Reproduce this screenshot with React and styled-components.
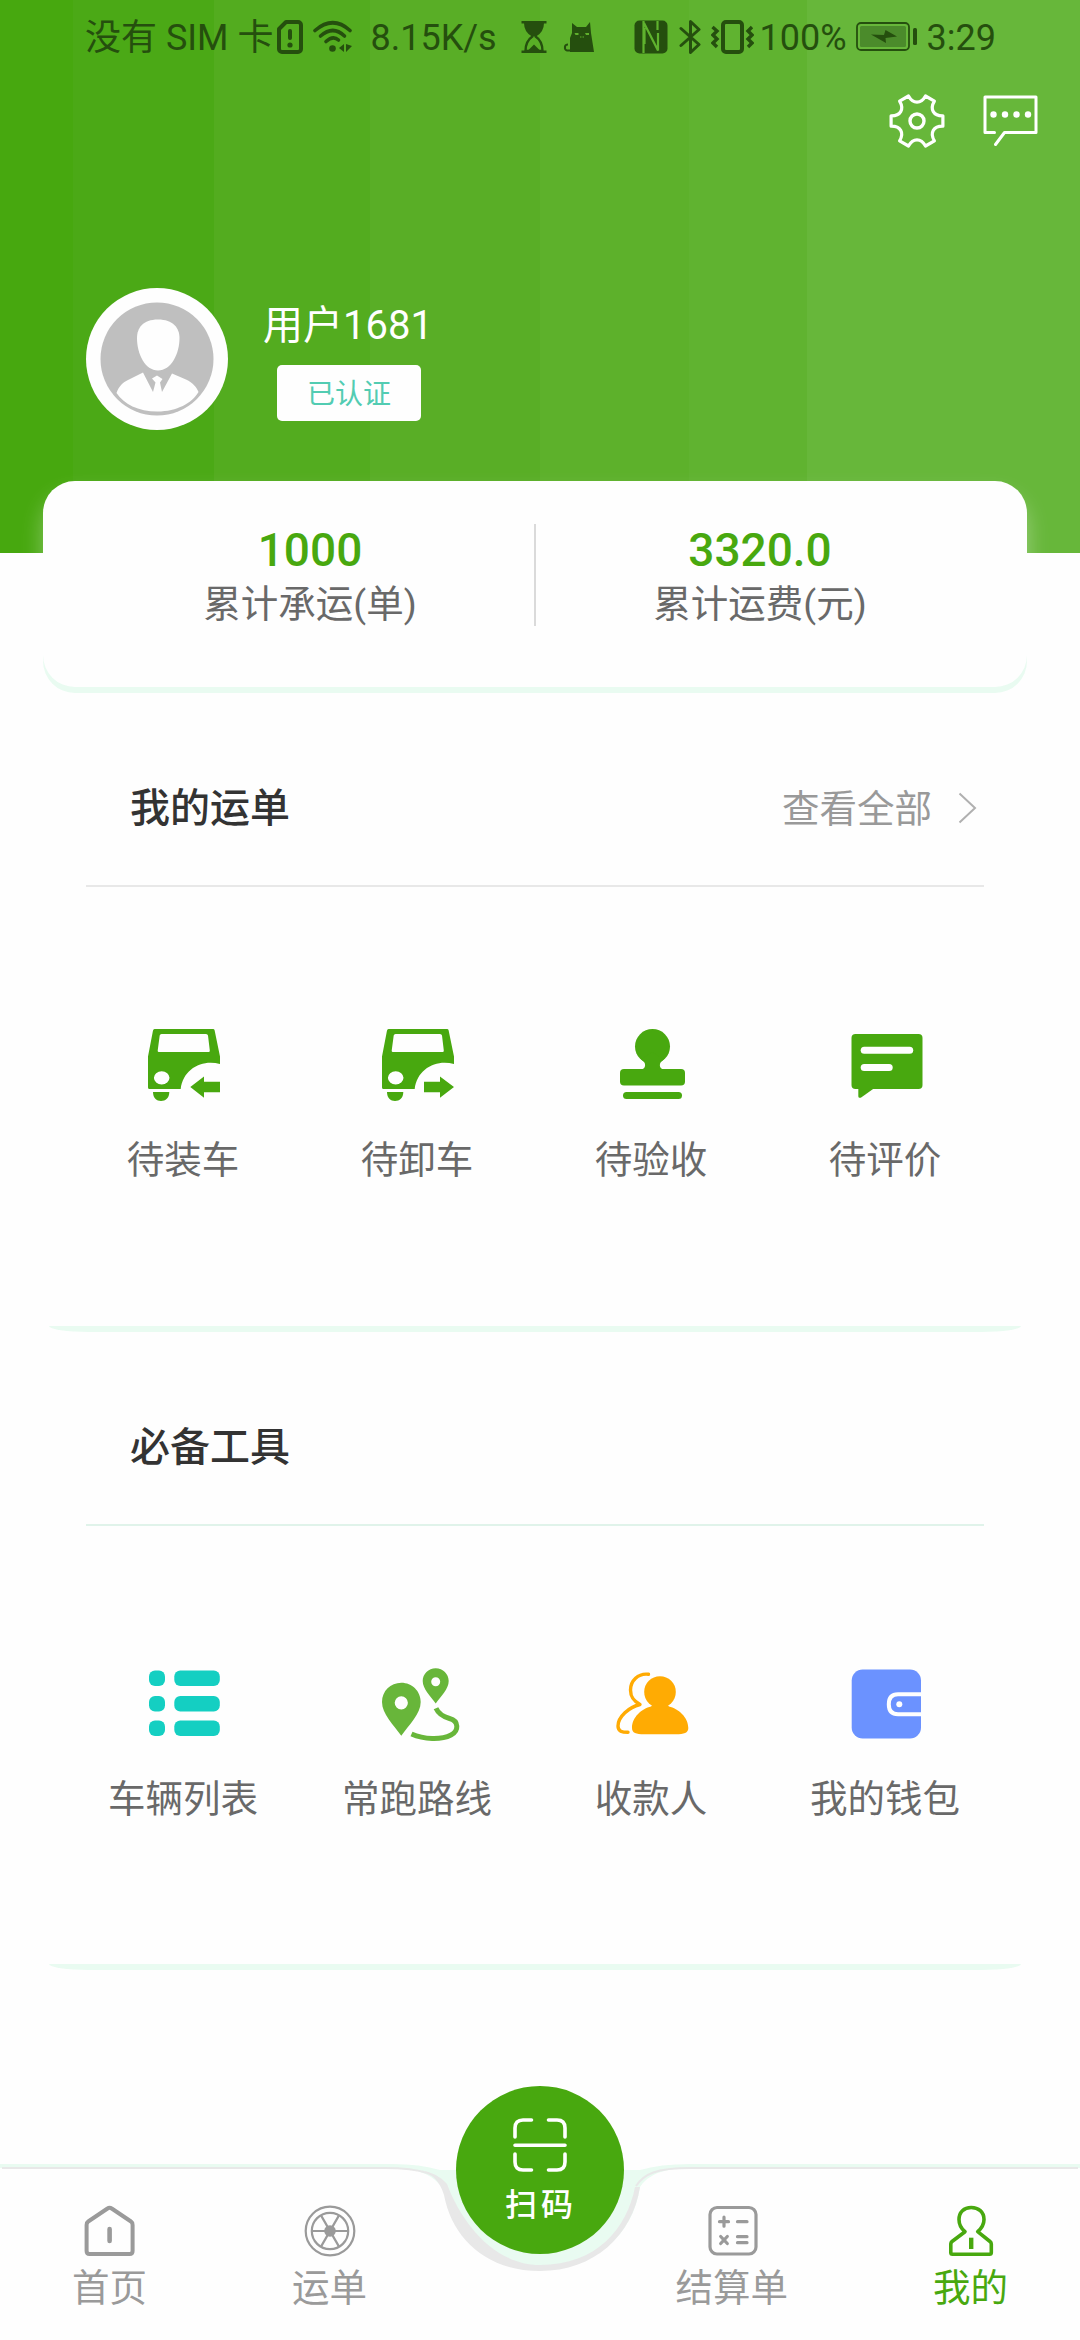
import React from "react";
import styled, { createGlobalStyle } from "styled-components";

const GREEN = "#48a80f";
const DARK = "#254f0e";

const GlobalStyle = createGlobalStyle`
  * {
    box-sizing: border-box;
  }
  body {
    margin: 0;
    background-color: #fefefe;
    font-family: Roboto, "Noto Sans CJK SC", sans-serif;
  }
`;

/* ---------- status bar icons ---------- */

const SimIcon = () => (
  <svg width="26" height="34" viewBox="0 0 26 34" fill="none" stroke={DARK}>
    <path d="M9 2H21a3 3 0 0 1 3 3V29a3 3 0 0 1-3 3H5a3 3 0 0 1-3-3V9Z" strokeWidth="4" strokeLinejoin="round" />
    <path d="M13 11V18" strokeWidth="4" strokeLinecap="round" />
    <circle cx="13" cy="25" r="2.6" fill={DARK} stroke="none" />
  </svg>
);

const WifiIcon = () => (
  <svg width="40" height="34" viewBox="0 0 40 34" fill="none" stroke={DARK} strokeLinecap="round">
    <path d="M2 10.5Q20-5 37 10.5" strokeWidth="3.6" />
    <path d="M7.5 16Q20 5 31.5 16" strokeWidth="3.6" />
    <path d="M13 21.5Q20 15 25.5 20" strokeWidth="3.6" />
    <circle cx="19.5" cy="28.5" r="3.3" fill={DARK} stroke="none" />
    <path d="M31 24v8l-5-4ZM33 24v8l6-6Z" fill={DARK} stroke="none" />
  </svg>
);

const HourglassIcon = () => (
  <svg width="26" height="32" viewBox="0 0 26 32" fill={DARK}>
    <path d="M.5 0H25.5V2.5H.5ZM.5 29.5H25.5V32H.5ZM3 2H23Q23 11 15 15.5H11Q3 11 3 2Z" />
    <path d="M12 15Q4.5 20 4.5 30H21.5Q21.5 20 14 15" fill="none" stroke={DARK} strokeWidth="2.4" />
    <path d="M6.5 30 13 23.5 19.5 30Z" />
  </svg>
);

const CatIcon = () => (
  <svg width="32" height="32" viewBox="0 0 32 32">
    <path d="M7 31V17L9 12V2L14 6H23L27 1 28 12 31 31Z" fill={DARK} />
    <path d="M8 29.5H4Q1.5 29 2 25.5 2.5 23.5 5 23.5" fill="none" stroke={DARK} strokeWidth="2" />
    <path d="M11.5 12h4v2h-3ZM22 12h4v2h-3ZM17 15.5h1.5v1h-1.5ZM19.5 15.5H21v1h-1.5Z" fill="#5fb02c" />
  </svg>
);

const NfcIcon = () => (
  <svg width="34" height="34" viewBox="0 0 34 34">
    <rect x="0.5" y="0.5" width="33" height="33" rx="5" fill={DARK} />
    <path d="M9.5 33V1M10 3 24 30.5V13M10.5 24V8M23.5 1V10" fill="none" stroke="#5fb22e" strokeWidth="2.2" />
  </svg>
);

const BluetoothIcon = () => (
  <svg width="22" height="36" viewBox="0 0 22 36" fill="none" stroke={DARK} strokeWidth="3" strokeLinejoin="round" strokeLinecap="round">
    <path d="M2 9.5 20 25.5 11.5 33.5V2.5L20 10.5 2 26.5" />
  </svg>
);

const VibrateIcon = () => (
  <svg width="43" height="34" viewBox="0 0 43 34" fill="none" stroke={DARK}>
    <rect x="12" y="2" width="19" height="30" rx="3" strokeWidth="4" />
    <path d="M1.5 7 6 11 2 15 6 19 2 23 6 27M41 7 37 11 41 15 37 19 41 23 37 27" strokeWidth="3.4" />
  </svg>
);

const BatteryIcon = () => (
  <svg width="61" height="30" viewBox="0 0 61 30">
    <rect x="1" y="1" width="52" height="27" rx="4" fill="none" stroke={DARK} strokeWidth="1.8" />
    <rect x="4" y="4" width="46" height="21" rx="1.5" fill="#4b8b2b" />
    <rect x="57" y="6" width="4" height="17" rx="1.5" fill={DARK} />
    <path d="M15 12.5 28 13 29.5 8 41 14.5 29.5 16 30 21Z" fill={DARK} />
  </svg>
);

/* ---------- header icons ---------- */

/* one valley of the gear, repeated every 60 degrees */
const gearPath = () => {
  const part = [
    [-8.5, -25],
    [-6, -20.5],
    [-3.5, -18.8],
    [0, -18.8],
    [3.5, -18.8],
    [6, -20.5],
    [8.5, -25],
  ];
  let d = "";
  for (let i = 0; i < 6; i++) {
    const a = (i * Math.PI) / 3;
    const p = part.map(([x, y]) =>
      [x * Math.cos(a) - y * Math.sin(a), x * Math.sin(a) + y * Math.cos(a)]
        .map((n) => n.toFixed(2))
        .join(" ")
    );
    d += `${i ? "L" : "M"}${p[0]}C${p[1]} ${p[2]} ${p[3]}C${p[4]} ${p[5]} ${p[6]}`;
  }
  return d + "Z";
};

const GearIcon = () => (
  <svg width="58" height="56" viewBox="-29 -28 58 56" fill="none" stroke="#fff" strokeWidth="3.2" strokeLinejoin="round">
    <path d={gearPath()} />
    <circle r="7" strokeWidth="3.4" />
  </svg>
);

const MessageIcon = () => (
  <svg width="56" height="56" viewBox="0 0 56 56" fill="none" stroke="#fff" strokeWidth="3" strokeLinecap="round" strokeLinejoin="round">
    <path d="M12.5 39.5H3V4H54V39.5H22.5L13.5 51.5" />
    <g fill="#fff" stroke="none">
      <circle cx="11.5" cy="21.5" r="3.2" />
      <circle cx="23" cy="21.5" r="3.2" />
      <circle cx="34.5" cy="21.5" r="3.2" />
      <circle cx="46" cy="21.5" r="3.2" />
    </g>
  </svg>
);

const AvatarPicture = () => (
  <svg width="142" height="142" viewBox="0 0 142 142">
    <circle cx="71" cy="71" r="71" fill="#fefefe" />
    <circle cx="71" cy="71" r="56.5" fill="#bfbfbf" />
    <path d="M72 31.5C87 31.5 93.5 40 93.5 50C93.5 66 85 82.5 72 82.5C59 82.5 51 66 51 50C51 40 57 31.5 72 31.5Z" fill="#fefefe" />
    <path
      d="M30.5 105C33 98 37 94.5 42 92L57 84.5 67 104 69.5 94.5 66 90.5 71 87.5 76.5 91 74 94.5 76 104 86 85.5 100 91.5C107 94.5 111 100 112.5 104C106 115 91 123.5 71.5 123.5C52 123.5 38 116 30.5 105Z"
      fill="#fefefe"
    />
  </svg>
);

const ChevronIcon = () => (
  <svg width="19" height="32" viewBox="0 0 19 32" fill="none" stroke="#b0b0b0" strokeWidth="2">
    <path d="M1.5 1.5 17 16 1.5 30.5" />
  </svg>
);

/* ---------- menu icons ---------- */

const Truck = ({ arrow }) => (
  <svg width="84" height="80" viewBox="0 0 84 80" fill={GREEN}>
    <path
      fillRule="evenodd"
      d="M13.5 5H72Q73.3 5 73.6 6.3L79 32.5V40C61 35 42 45 39.7 65H8.5Q7 65 7 63.5V32.5L12 6.5Q12.3 5 13.5 5ZM20.5 10Q19 10 18.7 11.5L16.7 26.5Q16.5 28 18 28H67.5Q69 28 68.8 26.5L67 11.5Q66.7 10 65 10ZM20.7 47.2A7.8 6.6 0 1 0 20.7 60.4 7.8 6.6 0 1 0 20.7 47.2Z"
    />
    <path d="M12 68H28.3C28.3 74 24.5 77 20 77C15.5 77 12 74 12 68Z" />
    <path d={arrow} />
  </svg>
);

const LoadIcon = () => <Truck arrow="M49.3 63 63 52.5V57.7H79V68.3H63V73.7Z" />;
const UnloadIcon = () => <Truck arrow="M79 63 65 52.5V57.7H49V68.3H65V73.7Z" />;

const StampIcon = () => (
  <svg width="84" height="80" viewBox="0 0 84 80" fill={GREEN}>
    <circle cx="43.5" cy="22.5" r="17.5" />
    <path d="M32 35.5C38 38.5 37 45 32 45.5H55C50 45 49 38.5 55 35.5L43 28Z" />
    <rect x="11" y="45" width="65" height="16.5" rx="4" />
    <rect x="14" y="68" width="59" height="7" rx="3.5" />
  </svg>
);

const CommentIcon = () => (
  <svg width="84" height="80" viewBox="0 0 84 80" fill={GREEN}>
    <rect x="8.5" y="10" width="71" height="55" rx="4" />
    <path d="M15.3 64V72C15.3 74 17 74.3 18.5 73.3L31.5 64Z" />
    <rect x="17.7" y="22.7" width="52.5" height="7" rx="3.5" fill="#fefefe" />
    <rect x="17.7" y="40" width="32" height="7" rx="3.5" fill="#fefefe" />
  </svg>
);

const ListIcon = () => (
  <svg width="84" height="80" viewBox="0 0 84 80" fill="#14cfc2">
    {[7.5, 33, 57.5].map((y) => (
      <React.Fragment key={y}>
        <rect x="8" y={y} width="16" height="15.5" rx="6" />
        <rect x="33.3" y={y} width="45.5" height="15.5" rx="6" />
      </React.Fragment>
    ))}
  </svg>
);

const RouteIcon = () => (
  <svg width="84" height="80" viewBox="0 0 84 80" fill="#68b63a" overflow="visible">
    <path
      fillRule="evenodd"
      d="M26.3 19.7C37 19.7 45.7 28 45.7 39C45.7 51 34 62 26.3 72.7C18.5 62 7 51 7 39C7 28 15.5 19.7 26.3 19.7ZM26.3 33.2A6.6 6.6 0 1 0 26.3 46.4 6.6 6.6 0 1 0 26.3 33.2Z"
    />
    <path
      fillRule="evenodd"
      d="M60.7 5.2C68 5.2 73.7 11 73.7 18C73.7 26 66 33 60.7 40.5C55.5 33 47.7 26 47.7 18C47.7 11 53.5 5.2 60.7 5.2ZM60.7 14.2A4.5 4.5 0 1 0 60.7 23.2 4.5 4.5 0 1 0 60.7 14.2Z"
    />
    <path d="M61 45.3C64 52 69 54 74.5 55.5C84 58 84 68 76 72C66 77.2 49 76.5 36.5 71" fill="none" stroke="#68b63a" strokeWidth="5" />
  </svg>
);

const PayeeIcon = () => (
  <svg width="84" height="80" viewBox="0 0 84 80" fill="#ffab03">
    <circle cx="51" cy="29" r="15.8" />
    <path d="M42 43.5 44.5 41H57.5L60 43.5C69 45.5 79.3 54 79.3 65C79.3 70 75 71.2 67 71.2H35C27 71.2 23 70 23 65C23 54 33 45.5 42 43.5Z" />
    <path
      d="M39.5 11.3C29 10 21.5 18 21.5 27C21.5 35 25.5 38.5 31 41.5C20 44 9 54 9 63C9 68.5 13 69.3 19 69.3"
      fill="none"
      stroke="#ffab03"
      strokeWidth="3.4"
      strokeLinecap="round"
      strokeLinejoin="round"
    />
  </svg>
);

const WalletIcon = () => (
  <svg width="84" height="80" viewBox="0 0 84 80">
    <rect x="8.7" y="6.5" width="69.3" height="69" rx="11" fill="#6b92ff" />
    <path d="M79 31.3H55Q45.8 31.3 45.8 41.3 45.8 51.3 55 51.3H79" fill="none" stroke="#fefefe" strokeWidth="4" />
    <circle cx="56.3" cy="41.2" r="3" fill="#fefefe" />
  </svg>
);

/* ---------- tab bar icons ---------- */

const HomeIcon = () => (
  <svg width="60" height="56" viewBox="0 0 60 56" fill="none" stroke="#9a9a9a" strokeWidth="4" strokeLinejoin="round">
    <path d="M27.5 5.5Q29.6 4 31.7 5.5L51 18.5Q52.6 19.5 52.6 22V48Q52.6 51 49.6 51H9.6Q6.6 51 6.6 48V22Q6.6 19.5 8.2 18.5Z" />
    <path d="M29.6 26V38" strokeWidth="4.6" strokeLinecap="round" />
  </svg>
);

const WheelIcon = () => (
  <svg width="60" height="56" viewBox="0 0 60 56" fill="none" stroke="#9a9a9a" strokeWidth="2.2">
    <circle cx="30" cy="28" r="24.3" />
    <circle cx="30" cy="28" r="18.2" />
    <path d="M12 28H48M21 12.4 39 43.6M39 12.4 21 43.6" />
    <circle cx="30" cy="28" r="5.8" fill="#9a9a9a" stroke="none" />
  </svg>
);

const BillIcon = () => (
  <svg width="60" height="56" viewBox="0 0 60 56" fill="none" stroke="#9a9a9a" strokeWidth="3.2" strokeLinecap="round">
    <rect x="8" y="4.5" width="46" height="46.5" rx="7" />
    <path d="M17.5 18.7H26.5M22 14.2V23.2M35.5 18.7H45M35.5 33.7H45M35.5 39.7H45M18.7 33.5 25.3 40.5M25.3 33.5 18.7 40.5" />
  </svg>
);

const MineIcon = () => (
  <svg width="60" height="56" viewBox="0 0 60 56" fill="none" stroke={GREEN} strokeWidth="3.6" strokeLinejoin="round">
    <path d="M24 28.7C19.5 25 18 20.5 18 16.5C18 9 23 4.5 30.2 4.5C37.5 4.5 43 9 43 16.5C43 20.5 41 25 36.7 28.7L49 38.5Q50.3 39.5 50.3 41V49.5Q50.3 51.2 48.5 51.2H11.5Q9.8 51.2 9.8 49.5V41Q9.8 39.5 11 38.5Z" />
    <path d="M30.2 34.7V46" strokeWidth="4.4" />
  </svg>
);

const ScanIcon = () => (
  <svg width="56" height="56" viewBox="0 0 56 56" fill="none" stroke="#fff" strokeWidth="3.6" strokeLinecap="round">
    <path d="M3 20V11Q3 3 11 3H19.5M36.5 3H45Q53 3 53 11V20M53 37V45Q53 53 45 53H36.5M19.5 53H11Q3 53 3 45V37M3 28.3H53" />
  </svg>
);

const BarShape = () => (
  <svg width="1080" height="116" viewBox="0 0 1080 116" fill="none">
    <path d="M0 4H393Q420 4 440 10H640Q660 4 690 4H1080V8H690Q652 8 640 27C633 74 598 108 540 108C482 108 450 72 444 30Q430 8 393 8H0Z" fill="#e9fbf1" />
    <path d="M2 8H385C425 8 438 16 446 25M636 26C644 14 656 8 690 8H1078" stroke="#e8e8e8" strokeWidth="2" />
    <path d="M420 10Q438 15 444 35C452 78 486 111 540 111C594 111 632 76 640 27L635 27C627 68 597 105 540 105C495 105 462 64 447 24Q438 13 420 10Z" fill="#e8e8e8" />
  </svg>
);

const orderMenu = [
  { label: "待装车", icon: <LoadIcon /> },
  { label: "待卸车", icon: <UnloadIcon /> },
  { label: "待验收", icon: <StampIcon /> },
  { label: "待评价", icon: <CommentIcon /> },
];

const toolMenu = [
  { label: "车辆列表", icon: <ListIcon /> },
  { label: "常跑路线", icon: <RouteIcon /> },
  { label: "收款人", icon: <PayeeIcon /> },
  { label: "我的钱包", icon: <WalletIcon /> },
];

const Menu = ({ items }) => (
  <MenuGrid>
    {items.map((item) => (
      <MenuItem key={item.label}>
        {item.icon}
        <MenuLabel>{item.label}</MenuLabel>
      </MenuItem>
    ))}
  </MenuGrid>
);

const App = () => {
  return (
    <>
      <GlobalStyle />
      <Page>
        <Header>
          <StatusBar>
            <StatusText>没有 SIM 卡</StatusText>
            <StatusIcon $left={4}>
              <SimIcon />
            </StatusIcon>
            <StatusIcon $left={10}>
              <WifiIcon />
            </StatusIcon>
            <StatusText $left={17}>8.15K/s</StatusText>
            <StatusIcon $left={24}>
              <HourglassIcon />
            </StatusIcon>
            <StatusIcon $left={16}>
              <CatIcon />
            </StatusIcon>
            <StatusRight>
              <NfcIcon />
              <StatusIcon $left={11}>
                <BluetoothIcon />
              </StatusIcon>
              <StatusIcon $left={10}>
                <VibrateIcon />
              </StatusIcon>
              <StatusText $left={6}>100%</StatusText>
              <StatusIcon $left={9}>
                <BatteryIcon />
              </StatusIcon>
              <StatusText $left={10}>3:29</StatusText>
            </StatusRight>
          </StatusBar>
          <Toolbar>
            <GearIcon />
            <MessageIcon />
          </Toolbar>
          <Profile>
            <AvatarPicture />
            <ProfileInfo>
              <UserName>用户1681</UserName>
              <Badge>已认证</Badge>
            </ProfileInfo>
          </Profile>
        </Header>

        <StatsCard>
          <Stat>
            <StatNumber>1000</StatNumber>
            <StatLabel>累计承运(单)</StatLabel>
          </Stat>
          <StatDivider />
          <Stat>
            <StatNumber>3320.0</StatNumber>
            <StatLabel>累计运费(元)</StatLabel>
          </Stat>
        </StatsCard>

        <Section>
          <SectionHead $line="#e8e8e8">
            <SectionTitle>我的运单</SectionTitle>
            <MoreLink>
              <span>查看全部</span>
              <ChevronIcon />
            </MoreLink>
          </SectionHead>
          <Menu items={orderMenu} />
          <SectionEdge />
        </Section>

        <Section>
          <SectionHead $line="#e0f3ea">
            <SectionTitle>必备工具</SectionTitle>
          </SectionHead>
          <Menu items={toolMenu} />
          <SectionEdge />
        </Section>

        <TabBar>
          <BarBackground>
            <BarShape />
          </BarBackground>
          <TabGroup>
            <Tab>
              <HomeIcon />
              首页
            </Tab>
            <Tab>
              <WheelIcon />
              运单
            </Tab>
          </TabGroup>
          <ScanButton>
            <ScanIcon />
            <ScanLabel>扫码</ScanLabel>
          </ScanButton>
          <TabGroup>
            <Tab>
              <BillIcon />
              结算单
            </Tab>
            <Tab $active>
              <MineIcon />
              我的
            </Tab>
          </TabGroup>
        </TabBar>
      </Page>
    </>
  );
};

const Page = styled.div`
  display: flex;
  flex-direction: column;
  width: 1080px;
  height: 2340px;
  overflow: hidden;
  background-color: #fefefe;

  svg {
    display: block;
    flex-shrink: 0;
  }
`;
const Header = styled.header`
  flex-shrink: 0;
  height: 553px;
  background: linear-gradient(
    90deg,
    #47a80f 73px,
    #4ba916 73px 214px,
    #53ac1f 214px 370px,
    #59ae26 370px 540px,
    #5db12b 540px 689px,
    #60b330 689px 807px,
    #67b73a 807px
  );
`;
const StatusBar = styled.div`
  display: flex;
  align-items: center;
  height: 73px;
  padding: 0 84px 0 85px;
`;
const StatusText = styled.span`
  margin-left: ${({ $left }) => $left || 0}px;
  padding-top: 3px;
  font-size: 36px;
  line-height: 70px;
  color: ${DARK};
  white-space: nowrap;
`;
const StatusIcon = styled.span`
  margin-left: ${({ $left }) => $left}px;
`;
const StatusRight = styled.div`
  display: flex;
  align-items: center;
  margin-left: auto;
`;
const Toolbar = styled.div`
  display: flex;
  justify-content: flex-end;
  align-items: center;
  gap: 36px;
  height: 56px;
  margin-top: 20px;
  padding-right: 42px;
`;
const Profile = styled.div`
  display: flex;
  margin-top: 139px;
  padding-left: 86px;
`;
const ProfileInfo = styled.div`
  padding: 10px 0 0 35px;
`;
const UserName = styled.div`
  height: 56px;
  font-size: 40px;
  line-height: 56px;
  color: white;
`;
const Badge = styled.div`
  width: 144px;
  height: 56px;
  margin: 11px 0 0 14px;
  padding-top: 2px;
  border-radius: 5px;
  font-size: 28px;
  line-height: 56px;
  text-align: center;
  color: #52ccb2;
  background-color: #fefefe;
`;
const StatsCard = styled.div`
  position: relative;
  display: flex;
  flex-shrink: 0;
  height: 206px;
  margin: -72px 53px 0 43px;
  padding: 43px 43px 0;
  border-radius: 32px;
  background-color: #fefefe;
  box-shadow: 0 6px 0 0 #e9fbf1, 0 14px 22px rgba(254, 254, 254, 0.35);
`;
const Stat = styled.div`
  flex: 1;
  text-align: center;
`;
const StatNumber = styled.div`
  height: 52px;
  font-size: 46px;
  font-weight: 500;
  line-height: 52px;
  color: ${GREEN};
`;
const StatLabel = styled.div`
  height: 56px;
  font-size: 37.5px;
  line-height: 56px;
  color: #696969;
`;
const StatDivider = styled.div`
  width: 2px;
  height: 102px;
  background-color: #dadada;
`;
const Section = styled.section`
  display: flex;
  flex-direction: column;
  flex-shrink: 0;
  height: 638.5px;
  margin: 0 53px 0 43px;
`;
/* soft band that closes a section */
const SectionEdge = styled.div`
  flex-shrink: 0;
  height: 6px;
  margin: auto 6px -6px;
  border-radius: 0 0 40px 40px / 0 0 6px 6px;
  background-color: #e9fbf1;
`;
const SectionHead = styled.div`
  display: flex;
  justify-content: space-between;
  align-items: center;
  height: 200px;
  margin: 0 43px;
  padding: 46px 7px 0 44px;
  border-bottom: 2px solid ${({ $line }) => $line};
`;
const SectionTitle = styled.h2`
  margin: 0;
  font-size: 40px;
  font-weight: 500;
  line-height: 56px;
  color: #333;
`;
const MoreLink = styled.div`
  display: flex;
  align-items: center;
  gap: 26px;
  font-size: 37.5px;
  line-height: 56px;
  color: #999;

  svg {
    margin-bottom: 2px;
  }
`;
const MenuGrid = styled.div`
  display: grid;
  grid-template-columns: repeat(4, 234px);
  padding: 137px 0 0 23px;
`;
const MenuItem = styled.div`
  display: flex;
  flex-direction: column;
  align-items: center;
`;
const MenuLabel = styled.div`
  margin-top: 28px;
  font-size: 37.5px;
  line-height: 56px;
  color: #696969;
`;
const TabBar = styled.nav`
  position: relative;
  display: flex;
  justify-content: space-between;
  flex-shrink: 0;
  height: 180px;
  margin-top: auto;
  padding: 43px 72px 0;
`;
const BarBackground = styled.div`
  position: absolute;
  left: 0;
  top: 0;
`;
const TabGroup = styled.div`
  position: relative;
  display: flex;
  gap: 145px;
`;
const Tab = styled.div`
  display: flex;
  flex-direction: column;
  align-items: center;
  font-size: 37.5px;
  line-height: 58px;
  color: ${({ $active }) => ($active ? GREEN : "#9a9a9a")};
`;
/* sits over the notch of the bar */
const ScanButton = styled.div`
  position: absolute;
  left: 456px;
  top: -74px;
  display: flex;
  flex-direction: column;
  align-items: center;
  width: 168px;
  height: 168px;
  padding-top: 31px;
  border-radius: 50%;
  background-color: ${GREEN};
`;
const ScanLabel = styled.div`
  margin-top: 8px;
  padding-left: 2px;
  font-size: 32px;
  font-weight: 500;
  line-height: 48px;
  letter-spacing: 4px;
  color: white;
`;

export default App;
